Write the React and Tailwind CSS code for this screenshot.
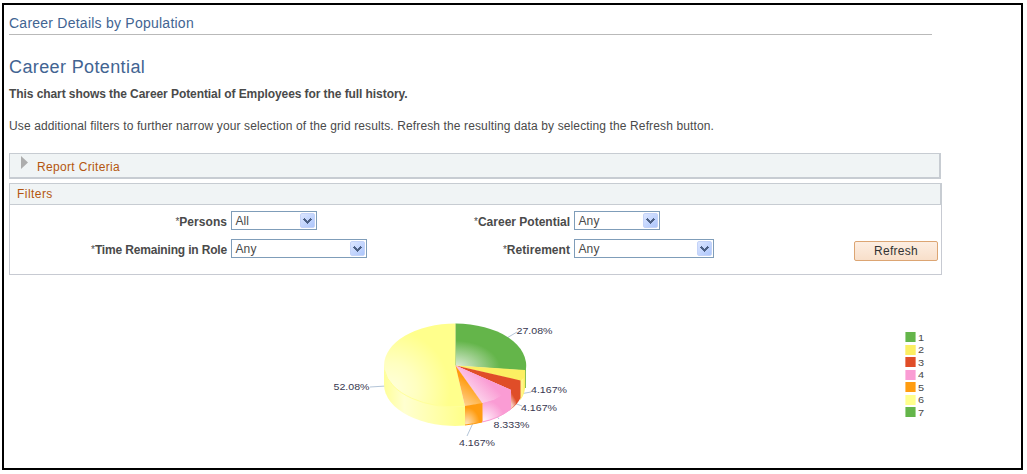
const slices = [
  { name: "1", swatch: "bg-[#64b54a]", edge: "border-[#a5d695]" },
  { name: "2", swatch: "bg-[#fcef62]", edge: "border-[#fdf392]" },
  { name: "3", swatch: "bg-[#e04d28]", edge: "border-[#ec8d75]" },
  { name: "4", swatch: "bg-[#fa9cd4]", edge: "border-[#fcc3e4]" },
  { name: "5", swatch: "bg-[#ff9c10]", edge: "border-[#ffc470]" },
  { name: "6", swatch: "bg-[#ffff8c]", edge: "border-[#ffffb8]" },
  { name: "7", swatch: "bg-[#64b54a]", edge: "border-[#a5d695]" },
];

function Select({ value, width }) {
  return (
    <div className={`flex h-[19px] items-center justify-between border border-[#7f9db9] bg-white pr-px pl-[3.5px] text-xs tracking-[0.1px] ${width}`}>
      <span className="pt-px leading-[17px]">{value}</span>
      <span className="flex h-[15px] w-[15px] items-center justify-center rounded-[2px] border border-[#c4d3f8] bg-linear-to-br from-[#dce6ff] to-[#adc6fb]">
        <svg width="9" height="7" viewBox="0 0 9 7" shapeRendering="crispEdges">
          <path d="M1 1h1v1h1v1h1v1h1V3h1V2h1V1h1v1h1v1H8v1H7v1H6v1H5v1H4V6H3V5H2V4H1V3H0V2h1z" fill="#4d6185" />
        </svg>
      </span>
    </div>
  );
}

function Field({ label, value, width, tracking = "tracking-[0.05px]" }) {
  return (
    <>
      <label className="flex h-[19px] items-center justify-end pt-[3px] pr-[4px] text-xs whitespace-nowrap">
        <span className="text-[10px]">*</span>
        <b className={tracking}>{label}</b>
      </label>
      <Select value={value} width={width} />
    </>
  );
}

function PieChart() {
  return (
    <svg className="block h-[150px] w-[260px] shrink-0" viewBox="320 310 260 150">
      <defs>
        <radialGradient id="green" gradientUnits="userSpaceOnUse" cx="455" cy="368" r="45" gradientTransform="translate(0 147) scale(1 .6)">
          <stop offset="0" stopColor="#e3efdf" />
          <stop offset="1" stopColor="#64b54a" />
        </radialGradient>
        <radialGradient id="cream" gradientUnits="userSpaceOnUse" cx="390" cy="390" r="60">
          <stop offset="0" stopColor="#ffffdc" />
          <stop offset="0.45" stopColor="#ffffc0" />
          <stop offset="1" stopColor="#ffff8c" />
        </radialGradient>
        <linearGradient id="creamSide" x1="0" x2="1" y1="0" y2="0">
          <stop offset="0" stopColor="#ffff98" />
          <stop offset="0.25" stopColor="#ffffd0" />
          <stop offset="1" stopColor="#ffff88" />
        </linearGradient>
        <linearGradient id="pink" gradientUnits="userSpaceOnUse" x1="470" y1="399" x2="488" y2="381">
          <stop offset="0" stopColor="#fde0f1" />
          <stop offset="1" stopColor="#fa9cd4" />
        </linearGradient>
        <radialGradient id="pinkSide" gradientUnits="userSpaceOnUse" cx="484" cy="421" r="21">
          <stop offset="0" stopColor="#fff4fb" />
          <stop offset="1" stopColor="#fa9cd4" />
        </radialGradient>
        <linearGradient id="orange" gradientUnits="userSpaceOnUse" x1="462" y1="403" x2="474" y2="385">
          <stop offset="0" stopColor="#ffcf8a" />
          <stop offset="1" stopColor="#ff9c10" />
        </linearGradient>
        <radialGradient id="orangeSide" cx="0.1" cy="0.95" r="0.75">
          <stop offset="0" stopColor="#ffe4bd" />
          <stop offset="1" stopColor="#ff9c10" />
        </radialGradient>
        <linearGradient id="redSide" gradientUnits="userSpaceOnUse" x1="511" y1="403" x2="516" y2="400">
          <stop offset="0" stopColor="#f6c9bd" />
          <stop offset="1" stopColor="#e04d28" />
        </linearGradient>
      </defs>

      <path d="M506 338.500L517 332M520 394L531 392M514 403L522 406M495 414L499 419M473 423L467 436M370 387L386 386" fill="none" stroke="#b4c5d8" />

      <path d="M384 365.500V384.500A71 41.500 0 0 0 465 425.500V406Z" fill="url(#creamSide)" />
      <path d="M455.500 365.500V323.500A71.500 42 0 0 0 384 365.500A71.500 41.500 0 0 0 465 406.500Z" fill="url(#cream)" />
      <path d="M384.500 370A71 41.500 0 0 0 465 406.500" fill="none" stroke="#ffff9b" />
      <path d="M525 368V388" stroke="#8cbf55" strokeWidth="2" />
      <path d="M455.500 365.500V323.500A70.500 42 0 0 1 525.700 370.500Z" fill="url(#green)" />
      <path d="M455.500 365.500L525 370V388Q524 396 520 400V381Z" fill="#fcef62" />
      <path d="M520 381V400Q522 398 523.500 393V378Z" fill="#fff588" />
      <path d="M455.500 365.500L520.500 380.500V398Q517 405 511 409V390Z" fill="#e04d28" />
      <path d="M511 391L516 395V404L511 409Z" fill="url(#redSide)" />
      <path d="M455.500 365.500L511 390V409Q500 418 482.500 422V403.500Z" fill="#fa9cd4" />
      <path d="M455.500 365.500L511 390L494 400L482.500 403.500Z" fill="url(#pink)" />
      <path d="M482.500 403L494 400L511 390.500V409Q500 418 482.500 422Z" fill="url(#pinkSide)" />
      <path d="M455.500 365.500L482.500 403.500L465 406.500Z" fill="url(#orange)" />
      <path d="M465 406L482.500 403V422Q475 424 465 425Z" fill="url(#orangeSide)" />
      <path d="M465 425Q474 424 482 422" stroke="#ff9c10" fill="none" />
      <path d="M482 422Q498 419 511 409" stroke="#fa9cd4" fill="none" />
      <path d="M455.500 324V365.500" stroke="#c1dc83" />

      <g fill="#373750" fontFamily="'Liberation Sans', Arial, sans-serif" fontSize="9.500">
        <text x="516.500" y="334" textLength="36" lengthAdjust="spacingAndGlyphs">27.08%</text>
        <text x="531" y="393" textLength="36" lengthAdjust="spacingAndGlyphs">4.167%</text>
        <text x="521" y="411" textLength="36" lengthAdjust="spacingAndGlyphs">4.167%</text>
        <text x="493.500" y="428" textLength="36" lengthAdjust="spacingAndGlyphs">8.333%</text>
        <text x="459" y="446" textLength="36" lengthAdjust="spacingAndGlyphs">4.167%</text>
        <text x="333.500" y="390" textLength="36" lengthAdjust="spacingAndGlyphs">52.08%</text>
      </g>
    </svg>
  );
}

export default function App() {
  return (
    <div className="h-[474px] w-[1027px] overflow-hidden bg-white pt-[3px] pl-[2px] font-['Liberation_Sans',Arial,sans-serif] text-[#4a4a4a]">
      <main className="h-[467px] w-[1021px] border-2 border-black pl-[5px]">
        <header className="h-[30px] w-[923px] border-b border-[#b9b9b9] pt-2 text-sm leading-5 tracking-[0.24px] text-[#426492]">
          Career Details by Population
        </header>
        <h1 className="mt-[18px] h-[28px] text-lg leading-[28px] tracking-[0.38px] text-[#426492]">Career Potential</h1>
        <p className="mt-[5px] text-xs leading-4 font-bold tracking-[-0.075px]">
          This chart shows the Career Potential of Employees for the full history.
        </p>
        <p className="mt-4 text-xs leading-4 tracking-[0.122px]">
          Use additional filters to further narrow your selection of the grid results. Refresh the resulting data by selecting the Refresh button.
        </p>

        <section className="mt-[19px] flex h-[26px] w-[932px] border border-r-2 border-b-2 border-[#c7ccd2] bg-[#f0f4f5] pl-[11px] text-xs tracking-[0.33px] text-[#b4560f]">
          <svg className="mt-[2px] mr-[9px]" width="7" height="14" viewBox="0 0 7 14">
            <path d="M0 0L7 6.500L0 13Z" fill="#adadad" />
          </svg>
          <h2 className="pt-[5px] leading-4">Report Criteria</h2>
        </section>

        <section className="mt-1 h-[92px] w-[933px] border border-t-0 border-[#c7cad2]">
          <h2 className="-mx-px h-[22px] border border-r-2 border-[#c7ccd2] bg-[#f0f4f5] pl-[7px] text-xs leading-5 tracking-[0.45px] text-[#b4560f]">
            Filters
          </h2>
          <div className="flex pt-[6px]">
            <div className="flex w-[907px] shrink-0 flex-col gap-[9px]">
              <div className="grid grid-cols-[221px_136px_207px_140px]">
                <Field label="Persons" value="All" width="w-[86px]" />
                <Field label="Career Potential" value="Any" width="w-[86px]" tracking="tracking-[0px]" />
              </div>
              <div className="grid grid-cols-[221px_136px_207px_140px]">
                <Field label="Time Remaining in Role" value="Any" width="w-[136px]" tracking="tracking-[-0.17px]" />
                <Field label="Retirement" value="Any" width="w-[140px]" />
              </div>
            </div>
            <button className="mt-[30px] -ml-[63px] h-5 w-[84px] shrink-0 rounded-[2px] border border-[#dca573] bg-linear-to-b from-[#fdeee2] to-[#f8dfca] text-xs leading-[18px] tracking-[0.3px] text-[#333]">
              Refresh
            </button>
          </div>
        </section>

        <section className="flex pt-[35px] pl-[311px]">
          <PieChart />
          <ul className="mt-[22px] ml-[325px] flex flex-col gap-[2.5px]">
            {slices.map((slice) => (
              <li key={slice.name} className="flex h-[10px] items-center gap-[2px] text-[9.5px] leading-[10px]">
                <span className={`h-[10px] w-[11px] border-x ${slice.swatch} ${slice.edge}`} />
                <span className="origin-left scale-x-115 pt-px">{slice.name}</span>
              </li>
            ))}
          </ul>
        </section>
      </main>
    </div>
  );
}
